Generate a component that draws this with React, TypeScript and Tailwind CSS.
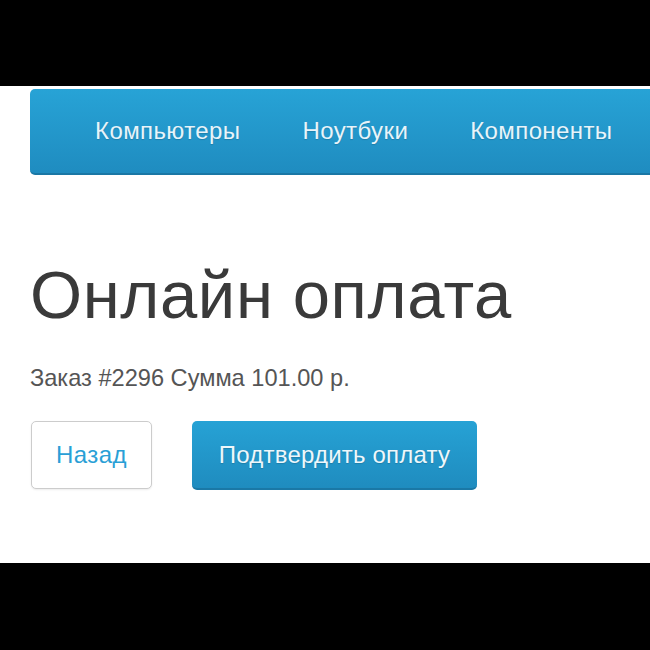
const navItems = ['Компьютеры', 'Ноутбуки', 'Компоненты'];

export default function App() {
  return (
    <div className="w-[650px] h-[650px] bg-black overflow-hidden" style={{ fontFamily: '"Liberation Sans", Arial, sans-serif' }}>
      <div className="h-[86px]" />
      <div className="h-[477px] bg-white pt-[3px] overflow-hidden">
        <nav className="ml-[30px] w-[700px] h-[86px] rounded-l-[5px] bg-gradient-to-b from-[#27a3d6] to-[#1f8cc0] border-b-2 border-[#1a77a5] flex items-center pl-[65px] gap-[62px]">
          {navItems.map((item) => (
            <span key={item} className="text-[24px] tracking-[0.4px] text-[#e8f4fa] whitespace-nowrap [text-shadow:0_1px_1px_rgba(0,0,0,0.15)]">
              {item}
            </span>
          ))}
        </nav>

        <div className="pl-[30px]">
          <h1 className="mt-[87px] text-[67px] leading-[66px] tracking-[0.6px] text-[#3a3a3a] whitespace-nowrap">Онлайн оплата</h1>
          <p className="mt-[39px] text-[23.6px] leading-[23px] text-[#555555] whitespace-nowrap">Заказ #2296 Сумма 101.00 р.</p>
          <div className="mt-[31px] flex gap-[40px] pl-px">
            <button className="w-[121px] h-[68px] rounded-[5px] border border-[#cccccc] bg-white text-[24px] tracking-[0.4px] text-[#2a9fd6] shadow-[0_1px_2px_rgba(0,0,0,0.08)]">
              Назад
            </button>
            <button className="w-[285px] h-[69px] rounded-[5px] bg-gradient-to-b from-[#26a2d5] to-[#1f8cbf] border-b-2 border-[#1a78a6] text-[24px] tracking-[0.2px] text-[#eef7fb] [text-shadow:0_1px_1px_rgba(0,0,0,0.15)]">
              Подтвердить оплату
            </button>
          </div>
        </div>
      </div>
    </div>
  );
}
